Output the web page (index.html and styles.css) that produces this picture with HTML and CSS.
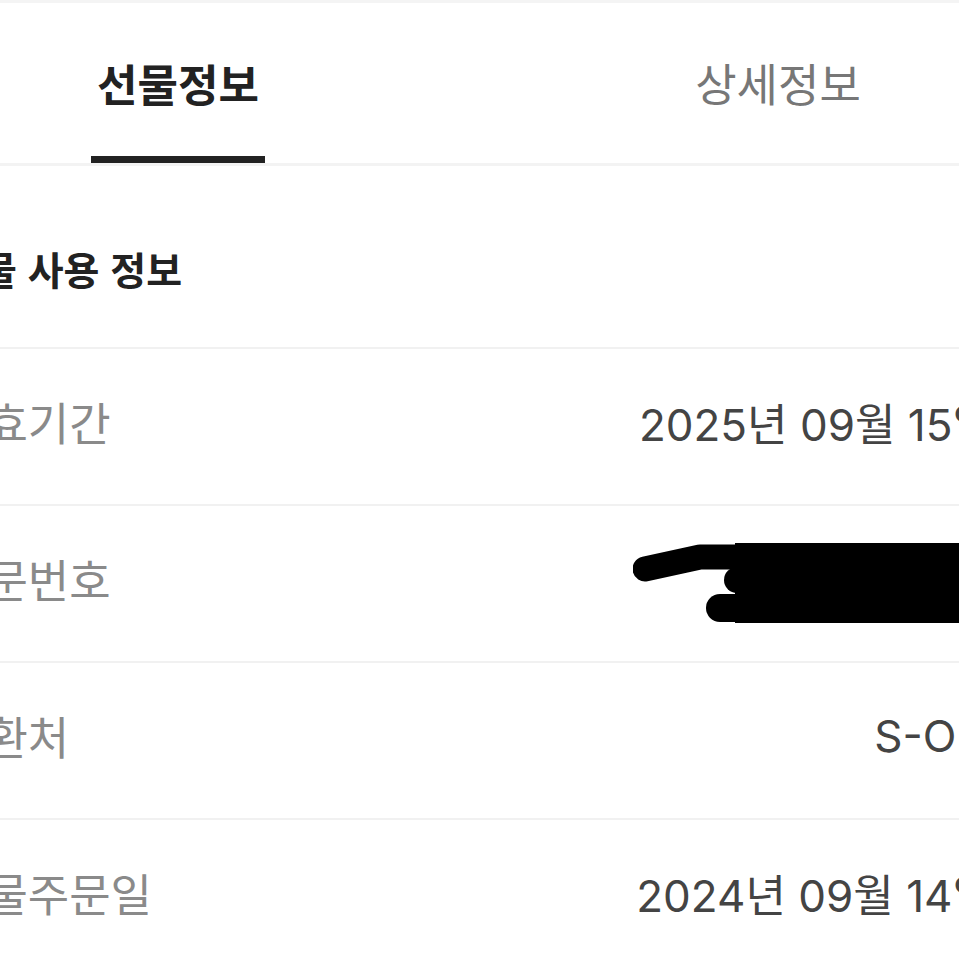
FILE: index.html
```html
<!DOCTYPE html>
<html lang="ko">
   <head>
      <meta charset="utf-8">
      <title>선물정보</title>
      <link rel="stylesheet" href="styles.css">
   </head>
   <body>
      <div class="screen">
         <div class="topbar"></div>
         <div class="tabs">
            <div class="tab active"><span class="tab-label">선물정보</span></div>
            <div class="tab"><span class="tab-label">상세정보</span></div>
         </div>

         <h2 class="section-title">선물 사용 정보</h2>

         <div class="info-list">
            <div class="info-row">
               <span class="info-label">유효기간</span>
               <span class="info-value">2025년 09월 15일</span>
            </div>
            <div class="info-row">
               <span class="info-label">주문번호</span>
               <svg class="redact" width="360" height="90" viewBox="0 0 360 90">
                  <path d="M12 30 L67 18 L127 18" fill="none" stroke="#000" stroke-width="25" stroke-linecap="round" stroke-linejoin="round"/>
                  <rect x="102" y="4" width="258" height="80" fill="#000"/>
                  <circle cx="104" cy="41" r="13" fill="#000"/>
                  <path d="M87 69 L360 69" fill="none" stroke="#000" stroke-width="28" stroke-linecap="round"/>
               </svg>
            </div>
            <div class="info-row">
               <span class="info-label">교환처</span>
               <span class="info-value">S-OIL</span>
            </div>
            <div class="info-row">
               <span class="info-label">선물주문일</span>
               <span class="info-value">2024년 09월 14일</span>
            </div>
         </div>
      </div>
   </body>
</html>
```

FILE: styles.css
```css
html, body {
    margin: 0;
    padding: 0;
    background: #fff;
}
body {
    width: 959px;
    height: 959px;
    overflow: hidden;
    font-family: "Noto Sans CJK KR", "Noto Sans", sans-serif;
}
.screen {
    width: 1200px;
    margin-left: -122px;
}
.topbar {
    height: 3px;
    background: #f4f4f4;
}
.tabs {
    display: flex;
    height: 160px;
    border-bottom: 3px solid #f3f3f3;
}
.tab {
    flex: 1;
    display: flex;
    justify-content: center;
    align-items: flex-end;
}
.tab-label {
    font-size: 45px;
    line-height: 60px;
    color: #777;
    padding: 0 6px 43px;
    border-bottom: 7px solid transparent;
}
.tab.active .tab-label {
    color: #222;
    font-weight: 700;
    font-size: 44px;
    border-bottom-color: #222;
}
.section-title {
    margin: 0;
    padding: 77px 67px 54px;
    font-size: 39px;
    line-height: 50px;
    font-weight: 700;
    color: #222;
}
.info-row {
    box-sizing: border-box;
    display: flex;
    justify-content: space-between;
    align-items: center;
    height: 157px;
    padding: 0 85px 10px 67px;
    border-top: 2px solid #f1f1f1;
}
.info-label {
    font-size: 45px;
    color: #8a8a8a;
}
.info-value {
    font-family: Inter, "Noto Sans CJK KR", sans-serif;
    font-size: 44px;
    color: #444;
}
.redact {
    display: block;
    margin-top: 10px;
}
```
